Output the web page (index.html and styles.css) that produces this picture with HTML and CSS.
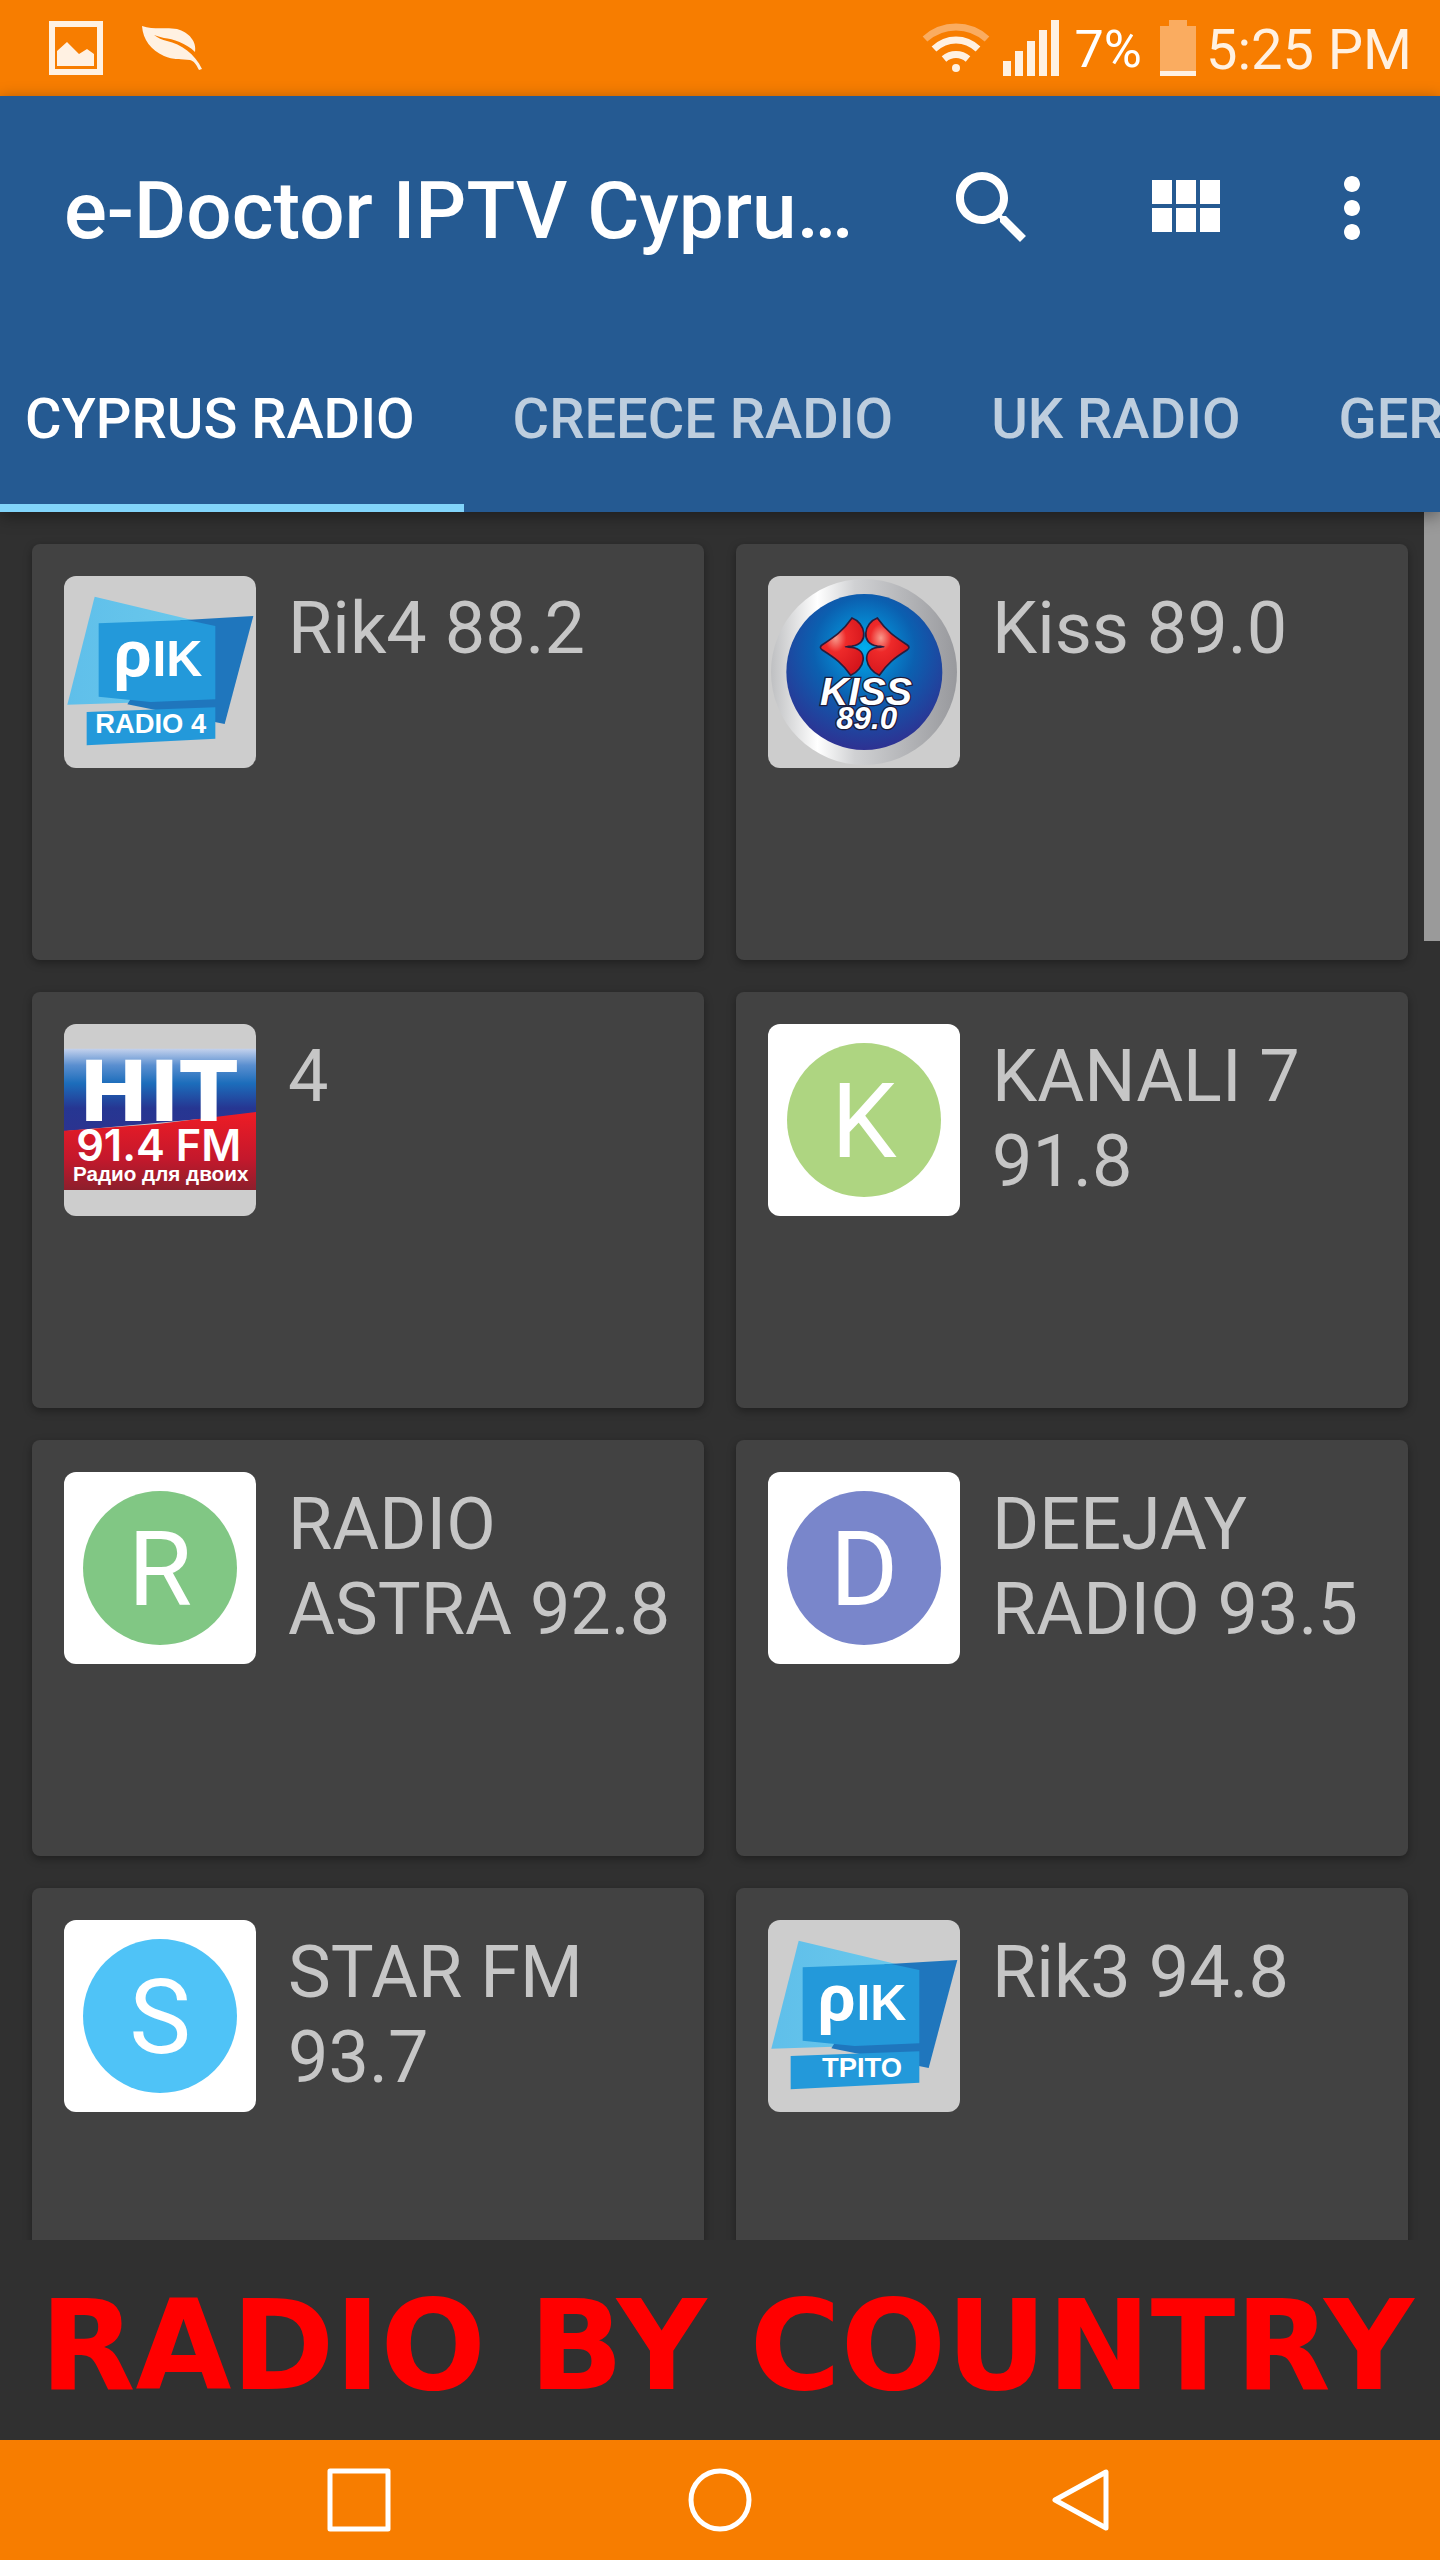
FILE: index.html
```html
<!DOCTYPE html>
<html lang="en">
<head>
    <meta charset="UTF-8">
    <meta name="viewport" content="width=device-width, initial-scale=1.0">
    <title>e-Doctor IPTV Cyprus Radio</title>
    <link rel="stylesheet" href="styles.css">
</head>
<body>
    <!-- Status bar -->
    <div class="status-bar">
        <svg class="status-picture" width="54" height="54" viewBox="0 0 54 54">
            <path fill-rule="evenodd" d="M0 0h54v54H0zM6 6v42h42V6z"/>
            <path d="M8 30l10-9 12 12 8-5 7 5v12H8z"/>
        </svg>
        <svg class="status-leaf" width="60" height="44" viewBox="0 0 60 44">
            <path d="M0 0C12 4 25 1 35 3c12 3 20 13 18 23C44 17 31 13 22 12c-4-1-7-2-10-3 4 3 8 5 13 6 14 3 28 13 35 28l-3 1c-3-6-5-9-9-10-8-1-17 0-26-4C9 24 1 14 0 0z"/>
        </svg>
        <div class="status-right">
            <svg width="68" height="50" viewBox="0 0 68 50">
                <g fill="none" stroke="#fff1e2" stroke-width="7">
                    <path stroke="#faac60" d="M3 16C21 0 47 0 65 16"/>
                    <path d="M12 26C25 14 43 14 56 26"/>
                    <path d="M22 36C29 30 39 30 46 36"/>
                </g>
                <circle cx="34" cy="45" r="4"/>
            </svg>
            <svg class="status-signal" width="56" height="56" viewBox="0 0 56 56">
                <path d="M0 41h8v15H0zM12 31h8v25h-8zM24 21h8v35h-8zM36 10h8v46h-8zM48 0h8v56h-8z"/>
            </svg>
            <span class="battery-level">7%</span>
            <svg class="status-battery" width="36" height="56" viewBox="0 0 36 56">
                <path fill="#faac60" d="M9 0h18v6h9v45H0V6h9z"/>
                <path d="M0 51h36v5H0z"/>
            </svg>
            <span class="clock">5:25 PM</span>
        </div>
    </div>

    <!-- Toolbar and tabs -->
    <header class="app-bar">
        <div class="toolbar">
            <h1>e-Doctor IPTV Cypru…</h1>
            <button type="button" class="tool-button" aria-label="Search">
                <svg viewBox="0 0 24 24"><path d="M15.500 14h-.79l-.28-.27C15.410 12.590 16 11.110 16 9.500 16 5.910 13.090 3 9.500 3S3 5.910 3 9.500 5.910 16 9.500 16c1.610 0 3.090-.59 4.230-1.570l.27.28v.79l5 4.990L20.490 19l-4.990-5zm-6 0C7.010 14 5 11.990 5 9.500S7.010 5 9.500 5 14 7.010 14 9.500 11.990 14 9.500 14z"/></svg>
            </button>
            <button type="button" class="tool-button" aria-label="Grid view">
                <svg viewBox="0 0 24 24"><path d="M4 11h5V5H4v6zm0 7h5v-6H4v6zm6 0h5v-6h-5v6zm6 0h5v-6h-5v6zm-6-7h5V5h-5v6zm6-6v6h5V5h-5z"/></svg>
            </button>
            <button type="button" class="tool-button tool-more" aria-label="More options">
                <svg viewBox="0 0 24 24"><path d="M12 8c1.100 0 2-.9 2-2s-.9-2-2-2-2 .9-2 2 .9 2 2 2zm0 2c-1.100 0-2 .9-2 2s.9 2 2 2 2-.9 2-2-.9-2-2-2zm0 6c-1.100 0-2 .9-2 2s.9 2 2 2 2-.9 2-2-.9-2-2-2z"/></svg>
            </button>
        </div>
        <nav class="tabs">
            <a href="#cyprus" class="tab active">CYPRUS RADIO</a>
            <a href="#creece" class="tab">CREECE RADIO</a>
            <a href="#uk" class="tab">UK RADIO</a>
            <a href="#ger" class="tab">GER</a>
        </nav>
    </header>

    <!-- Stations -->
    <main class="stations">
        <div class="grid">
            <a href="#rik4" class="card">
                <svg class="logo" viewBox="0 0 576 576">
                    <defs>
                        <linearGradient id="rikLight" x1="0" x2="1">
                            <stop offset="0" stop-color="#5fbfea"/>
                            <stop offset="1" stop-color="#6ccaec"/>
                        </linearGradient>
                    </defs>
                    <g id="rikShapes">
                        <path fill="url(#rikLight)" d="M92 62L460 150 454 372 10 386z"/>
                        <path fill="#1f76bd" d="M350 133L568 120 482 444 190 385z"/>
                        <path fill="#2399da" d="M104 142L370 132 454 150V370L260 378 104 362z"/>
                        <path fill="#2399da" d="M68 408L454 394V488L68 508z"/>
                    </g>
                    <text class="logo-rik" x="148" y="299">ρ<tspan class="logo-rik-small">IK</tspan></text>
                    <text class="logo-band" x="260" y="471">RADIO 4</text>
                </svg>
                <span class="station-name">Rik4 88.2</span>
            </a>
            <a href="#kiss" class="card">
                <svg class="logo" viewBox="0 0 576 576">
                    <defs>
                        <linearGradient id="kissRing" x1="0" x2="1">
                            <stop offset="0" stop-color="#bfc0c2"/>
                            <stop offset=".25" stop-color="#ffffff"/>
                            <stop offset=".45" stop-color="#d0d1d3"/>
                            <stop offset="1" stop-color="#98999d"/>
                        </linearGradient>
                        <radialGradient id="kissBlue" cx=".5" cy=".35" r=".65">
                            <stop offset="0" stop-color="#00aeef"/>
                            <stop offset=".5" stop-color="#0b60b0"/>
                            <stop offset="1" stop-color="#2e3192"/>
                        </radialGradient>
                        <radialGradient id="kissRed" cx=".35" cy=".35" r=".7">
                            <stop offset="0" stop-color="#f79a8c"/>
                            <stop offset=".35" stop-color="#ee2a2a"/>
                            <stop offset="1" stop-color="#d6161c"/>
                        </radialGradient>
                    </defs>
                    <circle cx="288" cy="288" r="279" fill="url(#kissRing)"/>
                    <circle cx="289" cy="288" r="234" fill="url(#kissBlue)"/>
                    <g fill="url(#kissRed)" stroke="#2a1c3c" stroke-width="5">
                        <path d="M252 126C224 166 200 182 162 207 155 212 156 217 163 222 202 247 224 262 248 298 290 280 304 222 252 214 226 212 226 212 252 210 306 204 292 140 252 126z"/>
                        <path d="M328 126C356 166 380 182 418 207 425 212 424 217 417 222 378 247 358 262 334 298 292 280 278 222 328 214 354 212 354 212 328 210 276 204 288 140 328 126z"/>
                    </g>
                    <text class="logo-kiss" x="294" y="387">KISS</text>
                    <text class="logo-kiss logo-kiss-small" x="296" y="460">89.0</text>
                </svg>
                <span class="station-name">Kiss 89.0</span>
            </a>
            <a href="#hit" class="card">
                <svg class="logo" viewBox="0 0 576 576">
                    <defs>
                        <linearGradient id="hitBlue" x1="0" y1="0" x2="0" y2="1">
                            <stop offset="0" stop-color="#c4d2ed"/>
                            <stop offset=".2" stop-color="#5a8fd0"/>
                            <stop offset=".42" stop-color="#1c6dbb"/>
                            <stop offset=".72" stop-color="#263692"/>
                            <stop offset="1" stop-color="#2b3390"/>
                        </linearGradient>
                        <linearGradient id="hitRed" x1="0" y1="0" x2="0" y2="1">
                            <stop offset="0" stop-color="#ee1c25"/>
                            <stop offset=".6" stop-color="#c4182c"/>
                            <stop offset="1" stop-color="#8c1f2c"/>
                        </linearGradient>
                    </defs>
                    <path fill="url(#hitBlue)" d="M0 74H576V270L0 322z"/>
                    <path fill="url(#hitRed)" d="M0 320L280 300 576 264V498H0z"/>
                    <text class="logo-hit" x="282" y="290">HIT</text>
                    <text class="logo-hit-fm" x="284" y="411">91.4 FM</text>
                    <text class="logo-hit-sub" x="290" y="472">Радио для двоих</text>
                </svg>
                <span class="station-name">4</span>
            </a>
            <a href="#kanali" class="card">
                <span class="letter-box"><span class="letter letter-green">K</span></span>
                <span class="station-name">KANALI 7 91.8</span>
            </a>
            <a href="#astra" class="card">
                <span class="letter-box"><span class="letter letter-mint">R</span></span>
                <span class="station-name">RADIO ASTRA 92.8</span>
            </a>
            <a href="#deejay" class="card">
                <span class="letter-box"><span class="letter letter-indigo">D</span></span>
                <span class="station-name">DEEJAY RADIO 93.5</span>
            </a>
            <a href="#star" class="card">
                <span class="letter-box"><span class="letter letter-sky">S</span></span>
                <span class="station-name">STAR FM 93.7</span>
            </a>
            <a href="#rik3" class="card">
                <svg class="logo" viewBox="0 0 576 576">
                    <use href="#rikShapes"/>
                    <text class="logo-rik" x="148" y="299">ρ<tspan class="logo-rik-small">IK</tspan></text>
                    <text class="logo-band" x="282" y="471">ΤΡΙΤΟ</text>
                </svg>
                <span class="station-name">Rik3 94.8</span>
            </a>
        </div>
        <div class="scroll-thumb"></div>
    </main>

    <footer class="banner">RADIO BY COUNTRY</footer>

    <!-- Navigation buttons -->
    <nav class="nav-bar">
        <button type="button" class="nav-button" aria-label="Recent apps">
            <svg width="64" height="64" viewBox="0 0 64 64"><rect x="3" y="3" width="58" height="58"/></svg>
        </button>
        <button type="button" class="nav-button" aria-label="Home">
            <svg width="64" height="64" viewBox="0 0 64 64"><circle cx="32" cy="32" r="29"/></svg>
        </button>
        <button type="button" class="nav-button" aria-label="Back">
            <svg width="64" height="64" viewBox="0 0 64 64"><path d="M57 4v56L6 32z"/></svg>
        </button>
    </nav>
</body>
</html>
```
FILE: styles.css
```css
* {
    box-sizing: border-box;
}

body {
    margin: 0;
    height: 100vh;
    display: flex;
    flex-direction: column;
    background-color: #303030;
    font-family: Roboto, sans-serif;
    color: #c6c6c6;
}

a {
    color: inherit;
    text-decoration: none;
}

button {
    border: none;
    padding: 0;
    background: none;
    cursor: pointer;
}

svg {
    display: block;
    flex-shrink: 0;
}

/* Status bar */
.status-bar {
    display: flex;
    align-items: center;
    height: 96px;
    flex-shrink: 0;
    padding: 0 28px 0 49px;
    background-color: #f77d00;
    color: #fff1e2;
    fill: #fff1e2;
}

.status-leaf {
    margin-left: 39px;
}

.status-right {
    display: flex;
    align-items: center;
    margin-left: auto;
}

.status-signal {
    margin: 0 16px 0 13px;
}

.status-battery {
    margin: 0 10px 0 18px;
}

.battery-level {
    padding-top: 3px;
    font-size: 52px;
    line-height: 96px;
    color: #fff;
}

.clock {
    padding-top: 3px;
    font-size: 56px;
    line-height: 96px;
}

/* Toolbar and tabs */
.app-bar {
    position: relative;
    z-index: 1;
    flex-shrink: 0;
    background-color: #255a92;
    color: #fff;
    box-shadow: 0 4px 16px rgba(0, 0, 0, 0.4);
}

.toolbar {
    display: flex;
    align-items: center;
    height: 224px;
    padding: 0 40px 0 64px;
}

h1 {
    flex: 1;
    margin: 0;
    padding-top: 6px;
    font-size: 80px;
    line-height: 96px;
    font-weight: 500;
    white-space: nowrap;
    overflow: hidden;
}

.tool-button {
    padding: 0 48px;
    fill: #fff;
}

.tool-button svg {
    width: 96px;
    height: 96px;
}

.tool-more {
    padding: 0 0 0 24px;
}

.tabs {
    display: flex;
    height: 192px;
    overflow: hidden;
}

.tab {
    flex-shrink: 0;
    padding: 0 49px;
    font-size: 56px;
    line-height: 198px;
    font-weight: 500;
    color: rgba(255, 255, 255, 0.7);
}

.tab.active {
    padding-left: 25px;
    color: #fff;
    border-bottom: 8px solid #81d4fa;
}

/* Stations */
.stations {
    position: relative;
    flex: 1;
    min-height: 0;
    overflow: hidden;
}

.grid {
    display: grid;
    grid-template-columns: 1fr 1fr;
    grid-auto-rows: 416px;
    gap: 32px;
    padding: 32px;
}

.card {
    display: flex;
    align-items: flex-start;
    gap: 32px;
    padding: 32px;
    border-radius: 8px;
    background-color: #424242;
    box-shadow: 0 3px 8px rgba(0, 0, 0, 0.35);
}

.logo, .letter-box {
    width: 192px;
    height: 192px;
    flex-shrink: 0;
    border-radius: 12px;
    background-color: #cdcdcd;
}

.letter-box {
    display: flex;
    align-items: center;
    justify-content: center;
    background-color: #fff;
}

.letter {
    width: 154px;
    height: 154px;
    border-radius: 50%;
    font-size: 104px;
    line-height: 158px;
    text-align: center;
    color: #fff;
}

.letter-green {
    background-color: #aed581;
}

.letter-mint {
    background-color: #81c784;
}

.letter-indigo {
    background-color: #7986cb;
}

.letter-sky {
    background-color: #4fc3f7;
}

.station-name {
    padding-top: 10px;
    font-size: 72px;
    line-height: 85px;
}

.scroll-thumb {
    position: absolute;
    top: 0;
    right: 0;
    width: 16px;
    height: 429px;
    background-color: #9a9a9a;
}

/* Logo lettering */
.logo text {
    fill: #fff;
}

.logo-rik {
    font-family: "Noto Sans", sans-serif;
    font-size: 190px;
    font-weight: bold;
}

.logo-rik-small {
    font-family: "Liberation Sans", sans-serif;
    font-size: 150px;
}

.logo-band {
    font-family: "Liberation Sans", sans-serif;
    font-size: 82px;
    font-weight: bold;
    text-anchor: middle;
}

.logo-kiss {
    font-family: "Liberation Sans", sans-serif;
    font-size: 118px;
    font-style: italic;
    font-weight: bold;
    text-anchor: middle;
    stroke: #1c1c3c;
    stroke-width: 8px;
    paint-order: stroke;
}

.logo-kiss-small {
    font-size: 94px;
}

.logo-hit {
    font-family: "DejaVu Sans", sans-serif;
    font-size: 252px;
    font-weight: bold;
    text-anchor: middle;
}

.logo-hit-fm {
    font-family: Inter, sans-serif;
    font-size: 130px;
    font-weight: 600;
    text-anchor: middle;
}

.logo-hit-sub {
    font-family: "Liberation Sans", sans-serif;
    font-size: 62px;
    font-weight: bold;
    text-anchor: middle;
}

/* Banner */
.banner {
    flex-shrink: 0;
    height: 200px;
    padding-left: 40px;
    font-family: "DejaVu Sans", Verdana, sans-serif;
    font-size: 124px;
    line-height: 212px;
    font-weight: bold;
    color: #f00;
    white-space: nowrap;
    overflow: hidden;
}

/* Navigation buttons */
.nav-bar {
    display: flex;
    flex-shrink: 0;
    height: 120px;
    padding: 0 178px;
    background-color: #f77d00;
}

.nav-button {
    flex: 1;
    display: flex;
    align-items: center;
    justify-content: center;
}

.nav-button svg {
    fill: none;
    stroke: #fff;
    stroke-width: 5px;
    stroke-linejoin: round;
}
```
